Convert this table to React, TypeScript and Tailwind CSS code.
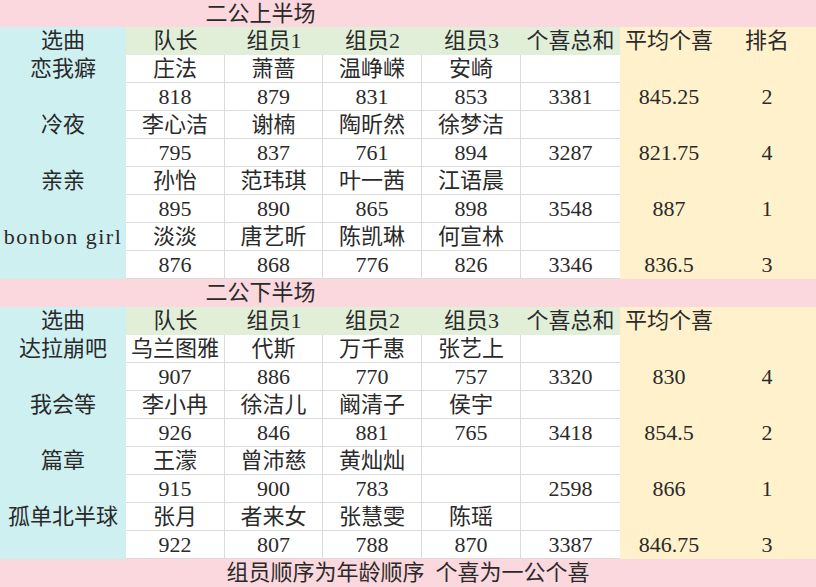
import React from 'react'

// 一組の出場チーム（選曲・メンバー・点数）
interface Team {
  song: string
  members: string[]
  scores: string[]
  total: string
  avg: string
  rank: string
}

const firstHalf: Team[] = [
  { song: '恋我癖', members: ['庄法', '萧蔷', '温峥嵘', '安崎'], scores: ['818', '879', '831', '853'], total: '3381', avg: '845.25', rank: '2' },
  { song: '冷夜', members: ['李心洁', '谢楠', '陶昕然', '徐梦洁'], scores: ['795', '837', '761', '894'], total: '3287', avg: '821.75', rank: '4' },
  { song: '亲亲', members: ['孙怡', '范玮琪', '叶一茜', '江语晨'], scores: ['895', '890', '865', '898'], total: '3548', avg: '887', rank: '1' },
  { song: 'bonbon girl', members: ['淡淡', '唐艺昕', '陈凯琳', '何宣林'], scores: ['876', '868', '776', '826'], total: '3346', avg: '836.5', rank: '3' },
]

const secondHalf: Team[] = [
  { song: '达拉崩吧', members: ['乌兰图雅', '代斯', '万千惠', '张艺上'], scores: ['907', '886', '770', '757'], total: '3320', avg: '830', rank: '4' },
  { song: '我会等', members: ['李小冉', '徐洁儿', '阚清子', '侯宇'], scores: ['926', '846', '881', '765'], total: '3418', avg: '854.5', rank: '2' },
  { song: '篇章', members: ['王濛', '曾沛慈', '黄灿灿', ''], scores: ['915', '900', '783', ''], total: '2598', avg: '866', rank: '1' },
  { song: '孤单北半球', members: ['张月', '者来女', '张慧雯', '陈瑶'], scores: ['922', '807', '788', '870'], total: '3387', avg: '846.75', rank: '3' },
]

const cols = 'grid grid-cols-[126px_99px_98px_99px_99px_99px_98px_98px]'
const cell = 'h-[28px] flex items-center justify-center whitespace-nowrap'
const white = `${cell} bg-white border-r border-b border-[#dcdcdc]`
const whiteLast = `${cell} bg-white border-b border-[#dcdcdc]`
const cyan = `${cell} bg-[#cff0f1]`
const yellow = `${cell} bg-[#fff1cb]`
const green = `${cell} bg-[#e1efd9]`

function TitleRow({ text, h = 'h-[28px]' }: { text: string; h?: string }) {
  return (
    <div className={`${cols} ${h} bg-[#fad8de]`}>
      <div className="col-span-5 flex items-center justify-center">{text}</div>
    </div>
  )
}

function HeaderRow({ withRank }: { withRank: boolean }) {
  return (
    <div className={cols}>
      <div className={cyan}>选曲</div>
      {['队长', '组员1', '组员2', '组员3', '个喜总和'].map((h) => (
        <div key={h} className={green}>{h}</div>
      ))}
      <div className={yellow}>平均个喜</div>
      <div className={yellow}>{withRank ? '排名' : ''}</div>
    </div>
  )
}

function TeamRows({ team }: { team: Team }) {
  return (
    <>
      <div className={cols}>
        <div className={`${cyan} ${team.song.length > 8 ? 'tracking-[1.5px]' : ''}`}>{team.song}</div>
        {team.members.map((m, i) => (
          <div key={i} className={white}>{m}</div>
        ))}
        <div className={whiteLast}></div>
        <div className={yellow}></div>
        <div className={yellow}></div>
      </div>
      <div className={cols}>
        <div className={cyan}></div>
        {team.scores.map((s, i) => (
          <div key={i} className={white}>{s}</div>
        ))}
        <div className={whiteLast}>{team.total}</div>
        <div className={yellow}>{team.avg}</div>
        <div className={yellow}>{team.rank}</div>
      </div>
    </>
  )
}

export default function App() {
  return (
    <div className="w-[816px] h-[587px] overflow-hidden bg-white text-[22px] leading-none text-[#2a2a2a] font-['Liberation_Serif','Noto_Sans_CJK_SC',serif]">
      <TitleRow text="二公上半场" h="h-[27px]" />
      <HeaderRow withRank />
      {firstHalf.map((t) => (
        <TeamRows key={t.song} team={t} />
      ))}
      <TitleRow text="二公下半场" />
      <HeaderRow withRank={false} />
      {secondHalf.map((t) => (
        <TeamRows key={t.song} team={t} />
      ))}
      <div className="h-[28px] bg-[#fad8de] flex items-center justify-center">
        <span className="whitespace-pre">组员顺序为年龄顺序  个喜为一公个喜</span>
      </div>
    </div>
  )
}
